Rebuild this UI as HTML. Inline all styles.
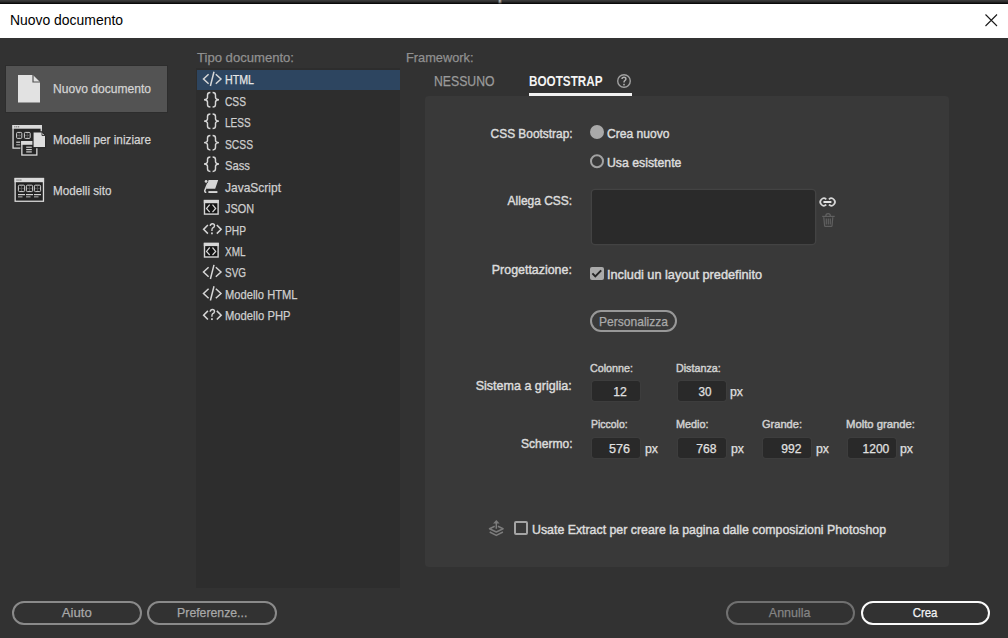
<!DOCTYPE html>
<html><head><meta charset="utf-8"><title>Nuovo documento</title>
<style>
*{margin:0;padding:0;box-sizing:border-box}
html,body{width:1008px;height:638px;overflow:hidden;background:#323232;font-family:"Liberation Sans",sans-serif;position:relative}
.a{position:absolute}
.t{position:absolute;line-height:1;white-space:pre}
svg{position:absolute;overflow:visible}
.btn{position:absolute;border:2px solid #8a8a8a;border-radius:12px}
.inp{position:absolute;background:#292929;border-radius:3px;width:48.3px;height:19.8px;box-shadow:0 0 0 1px #3d3d3d}
</style></head><body>
<div class="a" style="left:0;top:0;width:1008px;height:4px;background:linear-gradient(#3e3e3e,#2e2e2e 40%,#1c1c1c 65%,#000)"></div>
<div class="a" style="left:497.5px;top:0;width:4.5px;height:3.5px;background:linear-gradient(rgba(0,0,0,0),rgba(0,0,0,0.15) 50%,rgba(0,0,0,0.9)),linear-gradient(90deg,#304050,#a8b8c0 35%,#b8a898 60%,#503828)"></div>
<div class="a" style="left:0;top:4px;width:1008px;height:34px;background:#fff"></div>
<svg style="left:0;top:0" width="1008" height="40"><path d="M985.5 14.5 L997 26 M997 14.5 L985.5 26" stroke="#1a1a1a" stroke-width="1.1" fill="none"/></svg>

<!-- left column -->
<div class="a" style="left:6px;top:66px;width:160.5px;height:45.5px;background:#535353;box-shadow:0 0 0 1px #2d2d2d"></div>
<svg style="left:0;top:0" width="170" height="220">
 <path d="M18 75 H33 L40 82 V102.5 H18 Z" fill="#e2e2e2"/>
 <path d="M33 75 V82 H40" fill="none" stroke="#535353" stroke-width="1.2"/>
</svg>

<!-- list panel -->
<div class="a" style="left:196px;top:68px;width:204px;height:520px;background:#2d2d2d"></div>
<div class="a" style="left:197px;top:69.5px;width:203px;height:20.5px;background:#2d4560"></div>

<!-- framework panel -->
<div class="a" style="left:425px;top:96px;width:524px;height:471px;background:#393939;border-radius:4px"></div>
<div class="a" style="left:529px;top:93px;width:103px;height:3px;background:#f2f2f2"></div>
<svg style="left:0;top:0" width="1008" height="638">
 <circle cx="624" cy="81" r="6.3" fill="none" stroke="#a0a0a0" stroke-width="1.4"/>
 <path d="M622 79 Q622 77.2 624 77.2 Q625.9 77.2 625.9 78.9 Q625.9 80 624.8 80.6 Q624 81.1 624 82.6" fill="none" stroke="#b0b0b0" stroke-width="1.5"/><rect x="623.2" y="83.8" width="1.6" height="1.6" fill="#b0b0b0"/>
 <circle cx="597" cy="132" r="7" fill="#a9a9a9"/>
 <circle cx="597" cy="161.2" r="6" fill="none" stroke="#a2a2a2" stroke-width="2"/>
</svg>
<div class="a" style="left:592px;top:190px;width:222.7px;height:53.7px;background:#2a2a2a;border-radius:3px;box-shadow:0 0 0 1.3px #434343"></div>
<div class="a" style="left:590px;top:266.8px;width:13.8px;height:13.6px;background:#aaaaaa;border-radius:2px"></div>
<svg style="left:0;top:0" width="1008" height="638">
 <path d="M592.4 273.4 L595.3 276.4 L601.2 270.4" fill="none" stroke="#262626" stroke-width="2"/>
</svg>
<div class="btn" style="left:590.3px;top:309.6px;width:86.8px;height:22.9px;border:2.3px solid #989898"></div>
<div class="inp" style="left:591.5px;top:381.2px"></div>
<div class="inp" style="left:677.7px;top:381.2px"></div>
<div class="inp" style="left:591.5px;top:437.9px"></div>
<div class="inp" style="left:677.8px;top:437.9px"></div>
<div class="inp" style="left:762.8px;top:437.9px"></div>
<div class="inp" style="left:847.6px;top:437.9px"></div>
<div class="a" style="left:514px;top:521.4px;width:13.6px;height:13.2px;border:2px solid #a4a4a4;border-radius:2px"></div>

<!-- buttons -->
<div class="btn" style="left:12px;top:601px;width:130px;height:24px"></div>
<div class="btn" style="left:147px;top:601px;width:130px;height:24px"></div>
<div class="btn" style="left:726px;top:601px;width:129px;height:24px;border-color:#707070"></div>
<div class="btn" style="left:861px;top:601px;width:129px;height:24px;border:2.5px solid #fafafa"></div>
<!--ICONS--><svg style="left:0;top:0" width="1008" height="638"><g transform="translate(0.6 0)"><path d="M208 74.20 L202.9 78.95 L208 83.70 M215.2 74.20 L220.4 78.95 L215.2 83.70 M213.4 71.80 L209.8 86.00" fill="none" stroke="#d6d6d6" stroke-width="1.5"/></g>
<path d="M210.4 92.55 Q207.5 92.55 207.5 95.15 V97.50 Q207.5 99.30 204.1 99.70 Q207.5 100.10 207.5 101.90 V104.45 Q207.5 107.05 210.4 107.05 M212.6 92.55 Q215.5 92.55 215.5 95.15 V97.50 Q215.5 99.30 218.9 99.70 Q215.5 100.10 215.5 101.90 V104.45 Q215.5 107.05 212.6 107.05" fill="none" stroke="#d6d6d6" stroke-width="1.45"/>
<path d="M210.4 114.00 Q207.5 114.00 207.5 116.60 V118.95 Q207.5 120.75 204.1 121.15 Q207.5 121.55 207.5 123.35 V125.90 Q207.5 128.50 210.4 128.50 M212.6 114.00 Q215.5 114.00 215.5 116.60 V118.95 Q215.5 120.75 218.9 121.15 Q215.5 121.55 215.5 123.35 V125.90 Q215.5 128.50 212.6 128.50" fill="none" stroke="#d6d6d6" stroke-width="1.45"/>
<path d="M210.4 135.45 Q207.5 135.45 207.5 138.05 V140.40 Q207.5 142.20 204.1 142.60 Q207.5 143.00 207.5 144.80 V147.35 Q207.5 149.95 210.4 149.95 M212.6 135.45 Q215.5 135.45 215.5 138.05 V140.40 Q215.5 142.20 218.9 142.60 Q215.5 143.00 215.5 144.80 V147.35 Q215.5 149.95 212.6 149.95" fill="none" stroke="#d6d6d6" stroke-width="1.45"/>
<path d="M210.4 156.90 Q207.5 156.90 207.5 159.50 V161.85 Q207.5 163.65 204.1 164.05 Q207.5 164.45 207.5 166.25 V168.80 Q207.5 171.40 210.4 171.40 M212.6 156.90 Q215.5 156.90 215.5 159.50 V161.85 Q215.5 163.65 218.9 164.05 Q215.5 164.45 215.5 166.25 V168.80 Q215.5 171.40 212.6 171.40" fill="none" stroke="#d6d6d6" stroke-width="1.45"/>
<path d="M208.6 179.90 H218.2 L215.2 188.80 H206.2 Z" fill="#d6d6d6"/><circle cx="206.1" cy="181.40" r="1.4" fill="#d6d6d6"/><path d="M207.8 183.30 L204.7 190.60 Q204.6 192.40 206.3 192.20" fill="none" stroke="#d6d6d6" stroke-width="1.5"/><rect x="208.4" y="191.10" width="9" height="1.9" fill="#d6d6d6"/>
<rect x="204.5" y="200.60" width="13.6" height="13.50" fill="#151515" stroke="#d6d6d6" stroke-width="1.4"/><rect x="203.8" y="199.90" width="15" height="3.3" fill="#d6d6d6"/><path d="M209.7 204.60 L206.5 208.50 L209.7 212.10 M212.5 204.60 L215.7 208.50 L212.5 212.10" fill="none" stroke="#d6d6d6" stroke-width="1.2"/>
<g transform="translate(0.6 0)"><path d="M207.3 225.05 L203 229.35 L207.3 233.65 M216.2 225.05 L220.6 229.35 L216.2 233.65" fill="none" stroke="#d6d6d6" stroke-width="1.5"/><path d="M209.6 225.95 Q209.9 223.75 211.8 223.75 Q213.9 223.75 213.9 225.75 Q213.9 227.25 211.9 228.15 Q211.3 228.55 211.3 230.95" fill="none" stroke="#d6d6d6" stroke-width="1.4"/><rect x="210.5" y="232.45" width="1.7" height="1.8" fill="#d6d6d6"/></g>
<rect x="204.5" y="243.50" width="13.6" height="13.50" fill="#151515" stroke="#d6d6d6" stroke-width="1.4"/><rect x="203.8" y="242.80" width="15" height="3.3" fill="#d6d6d6"/><path d="M209.7 247.50 L206.5 251.40 L209.7 255.00 M212.5 247.50 L215.7 251.40 L212.5 255.00" fill="none" stroke="#d6d6d6" stroke-width="1.2"/>
<g transform="translate(0.6 0)"><path d="M208 267.25 L202.9 272.00 L208 276.75 M215.2 267.25 L220.4 272.00 L215.2 276.75 M213.4 264.85 L209.8 279.05" fill="none" stroke="#d6d6d6" stroke-width="1.5"/></g>
<g transform="translate(0.6 0)"><path d="M208 288.70 L202.9 293.45 L208 298.20 M215.2 288.70 L220.4 293.45 L215.2 298.20 M213.4 286.30 L209.8 300.50" fill="none" stroke="#d6d6d6" stroke-width="1.5"/></g>
<g transform="translate(0.6 0)"><path d="M207.3 310.85 L203 315.15 L207.3 319.45 M216.2 310.85 L220.6 315.15 L216.2 319.45" fill="none" stroke="#d6d6d6" stroke-width="1.5"/><path d="M209.6 311.75 Q209.9 309.55 211.8 309.55 Q213.9 309.55 213.9 311.55 Q213.9 313.05 211.9 313.95 Q211.3 314.35 211.3 316.75" fill="none" stroke="#d6d6d6" stroke-width="1.4"/><rect x="210.5" y="318.25" width="1.7" height="1.8" fill="#d6d6d6"/></g>
<g>
 <rect x="13.05" y="125.65" width="28.2" height="22.5" fill="#262626"/>
 <path d="M13.05 125 V148.15 H21.5 M41.25 125 V132" fill="none" stroke="#dadada" stroke-width="1.3"/>
 <rect x="12.4" y="125" width="29.5" height="3.7" fill="#dadada"/>
 <rect x="14.3" y="126.2" width="1.1" height="1.2" fill="#666"/><rect x="16.2" y="126.2" width="1.1" height="1.2" fill="#666"/><rect x="18.1" y="126.2" width="1.1" height="1.2" fill="#666"/>
 <rect x="16.6" y="132.4" width="5.2" height="6" rx="1" fill="#262626" stroke="#d0d0d0" stroke-width="1"/>
 <rect x="24.4" y="132.4" width="5.8" height="6" rx="1" fill="#262626" stroke="#d0d0d0" stroke-width="1"/>
 <path d="M19.2 133 V138 M17 135.4 H21.4 M27.3 133 V138 M25 135.4 H29.6" stroke="#5c5c5c" stroke-width="0.8"/>
 <rect x="16.2" y="141.6" width="4.2" height="1.2" fill="#d0d0d0"/><rect x="16.2" y="144.2" width="4.2" height="1.2" fill="#a0a0a0"/>
 <rect x="20.4" y="140.3" width="17.9" height="16.2" fill="#2a2a2a"/>
 <rect x="21.85" y="141.65" width="15" height="13.4" fill="#262626" stroke="#dadada" stroke-width="1.3"/>
 <rect x="21.2" y="141" width="16.3" height="3.8" fill="#dadada"/>
 <rect x="26.2" y="146.6" width="5.6" height="1.2" fill="#d0d0d0"/><rect x="26.2" y="149" width="5.6" height="1.2" fill="#d0d0d0"/><rect x="26.2" y="151.3" width="5.6" height="1.2" fill="#d0d0d0"/>
 <path d="M33 131.9 H42 L45.6 135.5 V147.6 H33 Z" fill="#dedede" stroke="#2a2a2a" stroke-width="1.2"/>
 <path d="M42 131.9 V135.5 H45.6" fill="none" stroke="#3a3a3a" stroke-width="1"/>
</g>
<g>
 <rect x="15.15" y="178.55" width="28.3" height="22.7" fill="#222" stroke="#dadada" stroke-width="1.3"/>
 <rect x="14.5" y="177.9" width="29.6" height="4.3" fill="#dadada"/>
 <rect x="16.5" y="179.4" width="1.1" height="1.3" fill="#666"/><rect x="18.4" y="179.4" width="1.1" height="1.3" fill="#666"/><rect x="20.3" y="179.4" width="1.1" height="1.3" fill="#666"/>
 <rect x="18.4" y="185.2" width="6.2" height="6.4" rx="1" fill="#222" stroke="#d0d0d0" stroke-width="1"/>
 <rect x="26.4" y="185.2" width="6.2" height="6.4" rx="1" fill="#222" stroke="#d0d0d0" stroke-width="1"/>
 <rect x="34.4" y="185.2" width="6.2" height="6.4" rx="1" fill="#222" stroke="#d0d0d0" stroke-width="1"/>
 <path d="M21.5 185.8 V191 M19 188.4 H24 M29.5 185.8 V191 M27 188.4 H32 M37.5 185.8 V191 M35 188.4 H40" stroke="#5c5c5c" stroke-width="0.8"/>
 <rect x="18" y="194" width="7" height="1.2" fill="#d0d0d0"/><rect x="26" y="194" width="7" height="1.2" fill="#d0d0d0"/><rect x="34" y="194" width="7" height="1.2" fill="#d0d0d0"/>
 <rect x="18" y="196.3" width="4.5" height="1.1" fill="#a8a8a8"/><rect x="26" y="196.3" width="4.5" height="1.1" fill="#a8a8a8"/><rect x="34" y="196.3" width="4.5" height="1.1" fill="#a8a8a8"/>
</g>
<g fill="none" stroke="#d8d8d8" stroke-width="1.7">
 <path d="M826.3 199.3 A3.6 3.6 0 1 0 826.3 204.7"/>
 <path d="M828.9 199.3 A3.6 3.6 0 1 1 828.9 204.7"/>
</g>
<rect x="823.2" y="201" width="8.4" height="2.1" rx="1" fill="#e6e6e6"/>
<g fill="none" stroke="#606060" stroke-width="1.2">
 <path d="M822.2 216.4 H834.7"/>
 <path d="M825.8 216.2 Q825.8 213.6 828.1 213.6 Q830.4 213.6 830.4 216.2"/>
 <path d="M823.8 217.2 L824.6 225.8 Q824.7 226.4 825.3 226.4 H831.3 Q831.9 226.4 832 225.8 L832.8 217.2"/>
 <path d="M826.3 218.4 V224.4 M828.3 218.4 V224.4 M830.3 218.4 V224.4"/>
</g>
<g fill="none" stroke="#7c7c7c" stroke-width="1.5" stroke-linejoin="round">
 <path d="M494.7 526.3 L489.5 528.8 L496.3 532 L503.1 528.8 L497.9 526.3"/>
 <path d="M489.7 532 L496.3 535.4 L502.9 532"/>
 <path d="M496.3 528.8 V522.6"/>
</g>
<path d="M496.3 520 L499.6 523.6 H493 Z" fill="#7c7c7c"/>
</svg><!--/ICONS-->
<div class="t" style="left:10.00px;top:13.05px;font-size:14px;color:#000;transform:scaleX(0.9944);transform-origin:left;">Nuovo documento</div>
<div class="t" style="left:53.00px;top:81.99px;font-size:13px;color:#d4d4d4;-webkit-text-stroke:0.25px #d4d4d4;transform:scaleX(0.9288);transform-origin:left;">Nuovo documento</div>
<div class="t" style="left:53.00px;top:133.39px;font-size:13px;color:#d4d4d4;-webkit-text-stroke:0.25px #d4d4d4;transform:scaleX(0.9041);transform-origin:left;">Modelli per iniziare</div>
<div class="t" style="left:53.00px;top:184.29px;font-size:13px;color:#d4d4d4;-webkit-text-stroke:0.25px #d4d4d4;transform:scaleX(0.8980);transform-origin:left;">Modelli sito</div>
<div class="t" style="left:196.50px;top:50.69px;font-size:13px;color:#909090;-webkit-text-stroke:0.25px #909090;transform:scaleX(1.0066);transform-origin:left;">Tipo documento:</div>
<div class="t" style="left:406.40px;top:50.89px;font-size:13px;color:#909090;-webkit-text-stroke:0.25px #909090;transform:scaleX(0.9836);transform-origin:left;">Framework:</div>
<div class="t" style="left:225.00px;top:73.39px;font-size:13px;color:#e6e6e6;-webkit-text-stroke:0.25px #e6e6e6;transform:scaleX(0.8194);transform-origin:left;">HTML</div>
<div class="t" style="left:225.00px;top:94.84px;font-size:13px;color:#cfcfcf;-webkit-text-stroke:0.25px #cfcfcf;transform:scaleX(0.7855);transform-origin:left;">CSS</div>
<div class="t" style="left:225.00px;top:116.29px;font-size:13px;color:#cfcfcf;-webkit-text-stroke:0.25px #cfcfcf;transform:scaleX(0.7729);transform-origin:left;">LESS</div>
<div class="t" style="left:225.00px;top:137.74px;font-size:13px;color:#cfcfcf;-webkit-text-stroke:0.25px #cfcfcf;transform:scaleX(0.7908);transform-origin:left;">SCSS</div>
<div class="t" style="left:225.00px;top:159.19px;font-size:13px;color:#cfcfcf;-webkit-text-stroke:0.25px #cfcfcf;transform:scaleX(0.8649);transform-origin:left;">Sass</div>
<div class="t" style="left:225.00px;top:180.64px;font-size:13px;color:#cfcfcf;-webkit-text-stroke:0.25px #cfcfcf;transform:scaleX(0.9225);transform-origin:left;">JavaScript</div>
<div class="t" style="left:225.00px;top:202.09px;font-size:13px;color:#cfcfcf;-webkit-text-stroke:0.25px #cfcfcf;transform:scaleX(0.8364);transform-origin:left;">JSON</div>
<div class="t" style="left:225.00px;top:223.54px;font-size:13px;color:#cfcfcf;-webkit-text-stroke:0.25px #cfcfcf;transform:scaleX(0.7855);transform-origin:left;">PHP</div>
<div class="t" style="left:225.00px;top:244.99px;font-size:13px;color:#cfcfcf;-webkit-text-stroke:0.25px #cfcfcf;transform:scaleX(0.7668);transform-origin:left;">XML</div>
<div class="t" style="left:225.00px;top:266.44px;font-size:13px;color:#cfcfcf;-webkit-text-stroke:0.25px #cfcfcf;transform:scaleX(0.7645);transform-origin:left;">SVG</div>
<div class="t" style="left:225.00px;top:287.89px;font-size:13px;color:#cfcfcf;-webkit-text-stroke:0.25px #cfcfcf;transform:scaleX(0.8577);transform-origin:left;">Modello HTML</div>
<div class="t" style="left:225.00px;top:309.34px;font-size:13px;color:#cfcfcf;-webkit-text-stroke:0.25px #cfcfcf;transform:scaleX(0.8633);transform-origin:left;">Modello PHP</div>
<div class="t" style="left:433.70px;top:74.05px;font-size:14px;color:#9a9a9a;-webkit-text-stroke:0.25px #9a9a9a;transform:scaleX(0.8738);transform-origin:left;">NESSUNO</div>
<div class="t" style="left:529.00px;top:74.45px;font-size:14px;color:#f4f4f4;font-weight:bold;transform:scaleX(0.8374);transform-origin:left;">BOOTSTRAP</div>
<div class="t" style="left:483.19px;top:126.59px;font-size:13px;color:#dcdcdc;-webkit-text-stroke:0.45px #dcdcdc;transform:scaleX(0.9151);transform-origin:right;">CSS Bootstrap:</div>
<div class="t" style="left:607.30px;top:126.69px;font-size:13px;color:#dcdcdc;-webkit-text-stroke:0.45px #dcdcdc;transform:scaleX(0.9298);transform-origin:left;">Crea nuovo</div>
<div class="t" style="left:607.30px;top:155.59px;font-size:13px;color:#dcdcdc;-webkit-text-stroke:0.45px #dcdcdc;transform:scaleX(0.9446);transform-origin:left;">Usa esistente</div>
<div class="t" style="left:502.31px;top:194.39px;font-size:13px;color:#dcdcdc;-webkit-text-stroke:0.45px #dcdcdc;transform:scaleX(0.9202);transform-origin:right;">Allega CSS:</div>
<div class="t" style="left:488.46px;top:262.59px;font-size:13px;color:#dcdcdc;-webkit-text-stroke:0.45px #dcdcdc;transform:scaleX(0.9542);transform-origin:right;">Progettazione:</div>
<div class="t" style="left:607.30px;top:267.99px;font-size:13px;color:#dcdcdc;-webkit-text-stroke:0.45px #dcdcdc;transform:scaleX(0.9793);transform-origin:left;">Includi un layout predefinito</div>
<div class="t" style="left:599.40px;top:314.99px;font-size:13px;color:#aaaaaa;-webkit-text-stroke:0.25px #aaaaaa;transform:scaleX(0.9270);transform-origin:left;">Personalizza</div>
<div class="t" style="left:472.48px;top:378.99px;font-size:13px;color:#dcdcdc;-webkit-text-stroke:0.45px #dcdcdc;transform:scaleX(0.9627);transform-origin:right;">Sistema a griglia:</div>
<div class="t" style="left:516.96px;top:437.19px;font-size:13px;color:#dcdcdc;-webkit-text-stroke:0.45px #dcdcdc;transform:scaleX(0.9274);transform-origin:right;">Schermo:</div>
<div class="t" style="left:590.40px;top:362.89px;font-size:11px;color:#d0d0d0;-webkit-text-stroke:0.45px #d0d0d0;transform:scaleX(0.9762);transform-origin:left;">Colonne:</div>
<div class="t" style="left:676.00px;top:362.89px;font-size:11px;color:#d0d0d0;-webkit-text-stroke:0.45px #d0d0d0;transform:scaleX(0.9747);transform-origin:left;">Distanza:</div>
<div class="t" style="left:590.70px;top:418.99px;font-size:11px;color:#d0d0d0;-webkit-text-stroke:0.45px #d0d0d0;transform:scaleX(0.9525);transform-origin:left;">Piccolo:</div>
<div class="t" style="left:676.40px;top:418.99px;font-size:11px;color:#d0d0d0;-webkit-text-stroke:0.45px #d0d0d0;transform:scaleX(0.9869);transform-origin:left;">Medio:</div>
<div class="t" style="left:761.60px;top:418.99px;font-size:11px;color:#d0d0d0;-webkit-text-stroke:0.45px #d0d0d0;transform:scaleX(1.0063);transform-origin:left;">Grande:</div>
<div class="t" style="left:846.40px;top:418.99px;font-size:11px;color:#d0d0d0;-webkit-text-stroke:0.45px #d0d0d0;transform:scaleX(1.0258);transform-origin:left;">Molto grande:</div>
<div class="t" style="left:612.85px;top:385.92px;font-size:12.5px;color:#e0e0e0;-webkit-text-stroke:0.25px #e0e0e0;transform:scaleX(0.9780);transform-origin:center;">12</div>
<div class="t" style="left:698.45px;top:385.92px;font-size:12.5px;color:#e0e0e0;-webkit-text-stroke:0.25px #e0e0e0;transform:scaleX(0.9348);transform-origin:center;">30</div>
<div class="t" style="left:730.40px;top:385.92px;font-size:12.5px;color:#e0e0e0;-webkit-text-stroke:0.25px #e0e0e0;transform:scaleX(0.9846);transform-origin:left;">px</div>
<div class="t" style="left:609.27px;top:442.72px;font-size:12.5px;color:#e0e0e0;-webkit-text-stroke:0.25px #e0e0e0;transform:scaleX(1.0067);transform-origin:center;">576</div>
<div class="t" style="left:695.57px;top:442.72px;font-size:12.5px;color:#e0e0e0;-webkit-text-stroke:0.25px #e0e0e0;transform:scaleX(0.9684);transform-origin:center;">768</div>
<div class="t" style="left:780.57px;top:442.72px;font-size:12.5px;color:#e0e0e0;-webkit-text-stroke:0.25px #e0e0e0;transform:scaleX(0.9684);transform-origin:center;">992</div>
<div class="t" style="left:861.99px;top:442.72px;font-size:12.5px;color:#e0e0e0;-webkit-text-stroke:0.25px #e0e0e0;transform:scaleX(0.9636);transform-origin:center;">1200</div>
<div class="t" style="left:644.80px;top:442.72px;font-size:12.5px;color:#e0e0e0;-webkit-text-stroke:0.25px #e0e0e0;transform:scaleX(0.9846);transform-origin:left;">px</div>
<div class="t" style="left:730.50px;top:442.72px;font-size:12.5px;color:#e0e0e0;-webkit-text-stroke:0.25px #e0e0e0;transform:scaleX(0.9846);transform-origin:left;">px</div>
<div class="t" style="left:815.70px;top:442.72px;font-size:12.5px;color:#e0e0e0;-webkit-text-stroke:0.25px #e0e0e0;transform:scaleX(0.9846);transform-origin:left;">px</div>
<div class="t" style="left:900.20px;top:442.72px;font-size:12.5px;color:#e0e0e0;-webkit-text-stroke:0.25px #e0e0e0;transform:scaleX(0.9846);transform-origin:left;">px</div>
<div class="t" style="left:531.60px;top:522.59px;font-size:13px;color:#dcdcdc;-webkit-text-stroke:0.45px #dcdcdc;transform:scaleX(0.9494);transform-origin:left;">Usate Extract per creare la pagina dalle composizioni Photoshop</div>
<div class="t" style="left:62.18px;top:606.19px;font-size:13px;color:#a8a8a8;-webkit-text-stroke:0.25px #a8a8a8;transform:scaleX(1.0121);transform-origin:center;">Aiuto</div>
<div class="t" style="left:174.78px;top:606.19px;font-size:13px;color:#a8a8a8;-webkit-text-stroke:0.25px #a8a8a8;transform:scaleX(0.9431);transform-origin:center;">Preferenze...</div>
<div class="t" style="left:768.31px;top:606.19px;font-size:13px;color:#848484;-webkit-text-stroke:0.25px #848484;transform:scaleX(0.9614);transform-origin:center;">Annulla</div>
<div class="t" style="left:910.91px;top:606.19px;font-size:13px;color:#f4f4f4;-webkit-text-stroke:0.25px #f4f4f4;transform:scaleX(0.8798);transform-origin:center;">Crea</div>
</body></html>
